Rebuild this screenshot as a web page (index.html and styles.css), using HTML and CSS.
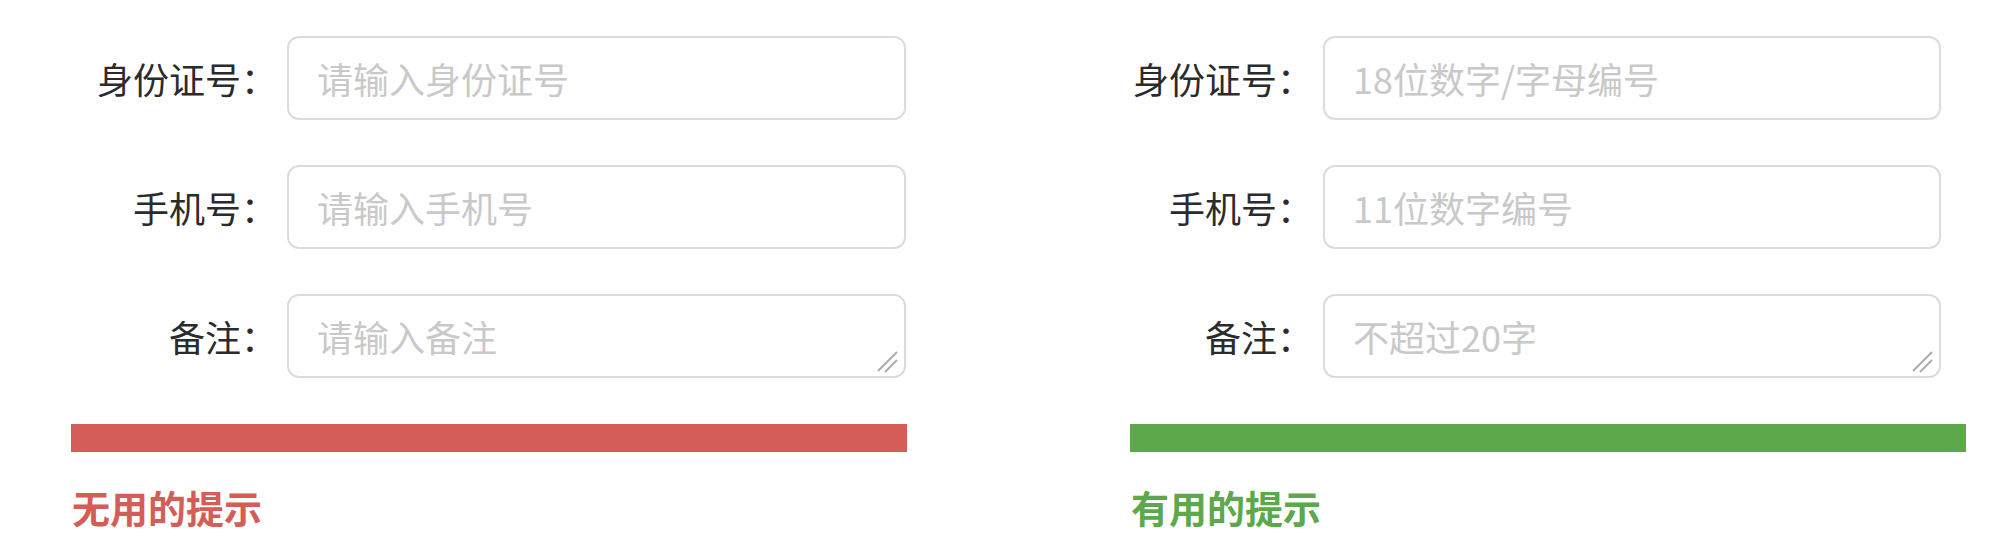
FILE: index.html
```html
<!DOCTYPE html>
<html lang="zh-CN">
<head>
    <meta charset="UTF-8">
    <title>表单提示对比</title>
    <link rel="stylesheet" href="styles.css">
</head>
<body>
    <div class="page">
        <div class="panel bad">
            <div class="row">
                <label class="label">身份证号：</label>
                <input class="field" type="text" placeholder="请输入身份证号">
            </div>
            <div class="row">
                <label class="label">手机号：</label>
                <input class="field" type="text" placeholder="请输入手机号">
            </div>
            <div class="row">
                <label class="label">备注：</label>
                <div class="area-wrap">
                    <textarea class="field area" placeholder="请输入备注"></textarea>
                    <svg class="grip" width="24" height="24" viewBox="0 0 24 24">
                        <path d="M1 21 L20 2 M8 22 L20 10" stroke="#acacac" stroke-width="2" fill="none"/>
                    </svg>
                </div>
            </div>
            <div class="bar"></div>
            <p class="hint">无用的提示</p>
        </div>
        <div class="panel good">
            <div class="row">
                <label class="label">身份证号：</label>
                <input class="field" type="text" placeholder="18位数字/字母编号">
            </div>
            <div class="row">
                <label class="label">手机号：</label>
                <input class="field" type="text" placeholder="11位数字编号">
            </div>
            <div class="row">
                <label class="label">备注：</label>
                <div class="area-wrap">
                    <textarea class="field area" placeholder="不超过20字"></textarea>
                    <svg class="grip" width="24" height="24" viewBox="0 0 24 24">
                        <path d="M1 21 L20 2 M8 22 L20 10" stroke="#acacac" stroke-width="2" fill="none"/>
                    </svg>
                </div>
            </div>
            <div class="bar"></div>
            <p class="hint">有用的提示</p>
        </div>
    </div>
</body>
</html>
```

FILE: styles.css
```css
body {
    margin: 0;
    background: #fff;
    font-family: "Noto Sans CJK SC", "Noto Sans", sans-serif;
    color: #333;
}
.page {
    display: flex;
    gap: 223px;
    padding: 36px 0 0 71px;
}
.panel {
    width: 836px;
}
.row {
    display: flex;
    align-items: center;
    height: 84px;
    margin-bottom: 45px;
}
.row:nth-of-type(3) {
    margin-bottom: 46px;
}
.label {
    flex: none;
    box-sizing: border-box;
    text-align: right;
    padding-right: 10px;
    font-size: 36px;
    color: #2b2b2b;
}
.bad .label {
    width: 216px;
}
.good .label {
    width: 193px;
}
.field {
    box-sizing: border-box;
    width: 619px;
    height: 84px;
    margin: 0;
    padding: 0 28px;
    border: 2px solid #dcdcdc;
    border-radius: 12px;
    font-family: inherit;
    font-size: 36px;
    color: #333;
    outline: none;
}
.good .field {
    width: 618px;
}
.field::placeholder {
    color: #c9c9c9;
}
.area-wrap {
    position: relative;
    height: 84px;
}
.area {
    display: block;
    padding: 13px 28px;
    line-height: 54px;
    resize: none;
}
.grip {
    position: absolute;
    right: 5px;
    bottom: 4px;
}
.bar {
    height: 28px;
}
.hint {
    margin: 27px 0 0 1px;
    font-size: 38px;
    font-weight: bold;
}
.bad .bar {
    background: #d45d57;
}
.bad .hint {
    color: #d45d57;
}
.good .bar {
    background: #5ca84b;
}
.good .hint {
    color: #5ca84b;
}
```
